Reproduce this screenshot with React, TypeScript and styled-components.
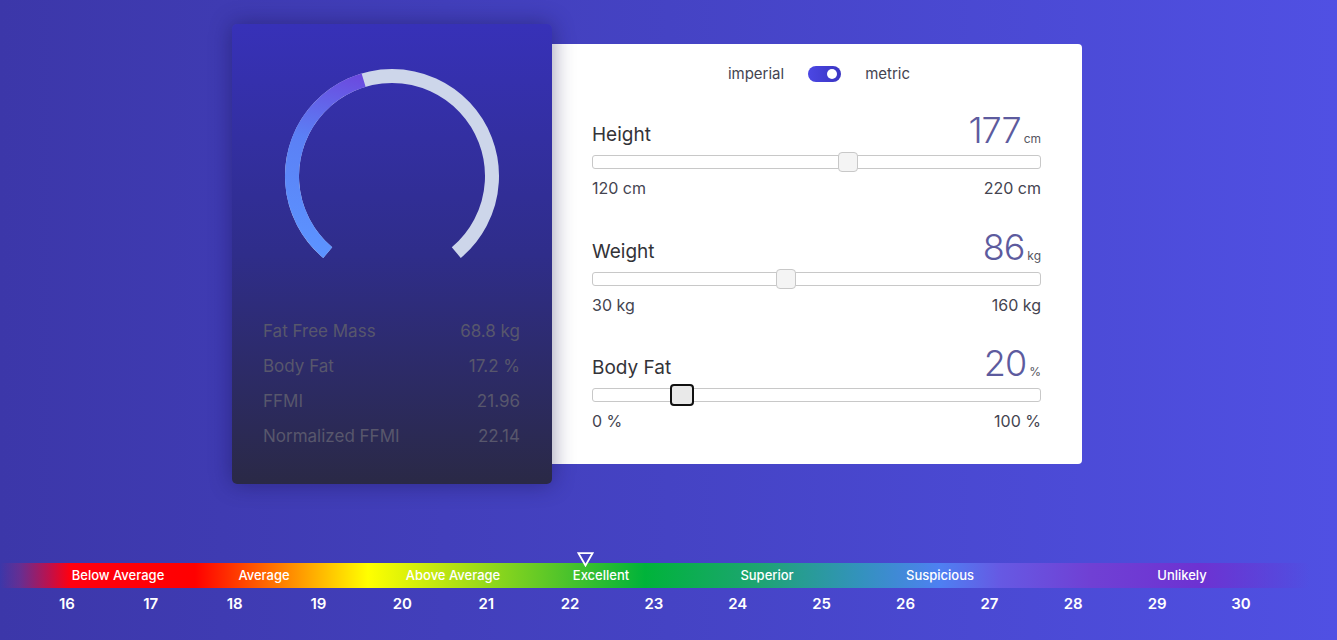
import styled, { createGlobalStyle } from "styled-components";

const GlobalStyle = createGlobalStyle`
  html, body {
    margin: 0;
    padding: 0;
  }
  body {
    font-family: "Inter", "Liberation Sans", sans-serif;
    background: linear-gradient(90deg, #3c37a9 0%, #4543c4 50%, #5050e3 100%);
    min-height: 640px;
    overflow: hidden;
  }
`;

interface iStat {
  label: string;
  value: string;
}

interface iSlider {
  label: string;
  value: number;
  unit: string;
  min: number;
  max: number;
  focused?: boolean;
}

const stats: iStat[] = [
  { label: "Fat Free Mass", value: "68.8 kg" },
  { label: "Body Fat", value: "17.2 %" },
  { label: "FFMI", value: "21.96" },
  { label: "Normalized FFMI", value: "22.14" },
];

const sliders: iSlider[] = [
  { label: "Height", value: 177, unit: "cm", min: 120, max: 220 },
  { label: "Weight", value: 86, unit: "kg", min: 30, max: 160 },
  { label: "Body Fat", value: 20, unit: "%", min: 0, max: 100, focused: true },
];

// label text + width of the segment it is centred in
const zones = [
  { name: "Below Average", w: 146 },
  { name: "Average", w: 146 },
  { name: "Above Average", w: 232 },
  { name: "Excellent", w: 64 },
  { name: "Superior", w: 268 },
  { name: "Suspicious", w: 78 },
  { name: "Unlikely", w: 406 },
];

const numbers = [16, 17, 18, 19, 20, 21, 22, 23, 24, 25, 26, 27, 28, 29, 30];

// point on the gauge circle, angle in degrees clockwise from the top
const pt = (deg: number, cx: number, cy: number, r: number) => {
  const a = (deg * Math.PI) / 180;
  return `${(cx + r * Math.sin(a)).toFixed(2)} ${(cy - r * Math.cos(a)).toFixed(2)}`;
};

const arcPath = (from: number, to: number) => {
  const cx = 120;
  const cy = 112;
  const r = 100;
  const large = to - from > 180 ? 1 : 0;
  return `M ${pt(from, cx, cy, r)} A ${r} ${r} 0 ${large} 1 ${pt(to, cx, cy, r)}`;
};

const Gauge = () => {
  return (
    <GaugeSvg width="240" height="220" viewBox="0 0 240 220">
      <defs>
        <linearGradient id="gfill" gradientUnits="userSpaceOnUse" x1="60" y1="190" x2="100" y2="15">
          <stop offset="0%" stopColor="#5c93ff" />
          <stop offset="60%" stopColor="#5b80f5" />
          <stop offset="100%" stopColor="#6b4adf" />
        </linearGradient>
      </defs>
      <path d={arcPath(-140, 140)} fill="none" stroke="#cdd6ea" strokeWidth="14" />
      <path d={arcPath(-140, -16.5)} fill="none" stroke="url(#gfill)" strokeWidth="14" />
    </GaugeSvg>
  );
};

const Slider = ({ s }: { s: iSlider }) => {
  const frac = (s.value - s.min) / (s.max - s.min);
  const half = s.focused ? 12 : 10;
  return (
    <Field>
      <FieldHead>
        <FieldLabel>{s.label}</FieldLabel>
        <ValueBox>
          <BigValue>{s.value}</BigValue>
          <Unit>{s.unit}</Unit>
        </ValueBox>
      </FieldHead>
      <Track>
        <Thumb $focused={s.focused} style={{ left: `calc(${frac * 100}% - ${half}px)` }} />
      </Track>
      <Range>
        <span>
          {s.min} {s.unit}
        </span>
        <span>
          {s.max} {s.unit}
        </span>
      </Range>
    </Field>
  );
};

const App = () => {
  return (
    <>
      <GlobalStyle />
      <Page>
        <CardsRow>
          <ResultCard>
            <GaugeHolder>
              <Gauge />
            </GaugeHolder>
            <StatList>
              {stats.map((el) => (
                <StatRow key={el.label}>
                  <span>{el.label}</span>
                  <span>{el.value}</span>
                </StatRow>
              ))}
            </StatList>
          </ResultCard>
          <FormCard>
            <ToggleRow>
              <ToggleText>imperial</ToggleText>
              <Switch>
                <Knob />
              </Switch>
              <ToggleText>metric</ToggleText>
            </ToggleRow>
            {sliders.map((s) => (
              <Slider key={s.label} s={s} />
            ))}
          </FormCard>
        </CardsRow>
        <Scale>
          <MarkerRow>
            <svg width="17" height="15" viewBox="0 0 17 15">
              <path d="M1.5 1.2 H15.5 L8.5 13.5 Z" fill="none" stroke="#fff" strokeWidth="1.8" />
            </svg>
          </MarkerRow>
          <Bar>
            {zones.map((z) => (
              <Zone key={z.name} $w={z.w}>
                {z.name}
              </Zone>
            ))}
          </Bar>
          <Numbers>
            {numbers.map((n) => (
              <Num key={n}>{n}</Num>
            ))}
          </Numbers>
        </Scale>
      </Page>
    </>
  );
};
export default App;

const Page = styled.div`
  width: 1337px;
  height: 640px;
  display: flex;
  flex-direction: column;
  padding-top: 24px;
  box-sizing: border-box;
`;

const CardsRow = styled.div`
  display: flex;
  align-items: center;
  justify-content: center;
  padding-right: 23px;
  height: 460px;
`;

const ResultCard = styled.div`
  width: 320px;
  height: 460px;
  border-radius: 5px;
  background: linear-gradient(180deg, #3731b8 0%, #2f2d8a 50%, #2a2946 100%);
  box-shadow: 0 0 22px rgba(20, 15, 70, 0.45);
  position: relative;
  z-index: 2;
  display: flex;
  flex-direction: column;
  box-sizing: border-box;
`;

const GaugeHolder = styled.div`
  display: flex;
  justify-content: center;
  padding-top: 40px;
  height: 260px;
  box-sizing: border-box;
`;

const GaugeSvg = styled.svg`
  display: block;
`;

const StatList = styled.div`
  display: flex;
  flex-direction: column;
  gap: 14px;
  padding: 37px 32px 0 31px;
`;

const StatRow = styled.div`
  display: flex;
  justify-content: space-between;
  font-size: 17px;
  line-height: 21px;
  color: #58576c;
`;

const FormCard = styled.div`
  width: 530px;
  height: 420px;
  background: #fff;
  border-radius: 0 4px 4px 0;
  padding: 20px 41px 0 40px;
  box-sizing: border-box;
  display: flex;
  flex-direction: column;
`;

const ToggleRow = styled.div`
  display: flex;
  align-items: center;
  justify-content: center;
  gap: 24px;
  height: 20px;
  margin-bottom: 30px;
  padding-left: 5px;
`;

const ToggleText = styled.span`
  font-size: 15px;
  color: #444450;
`;

const Switch = styled.div`
  width: 33px;
  height: 16px;
  border-radius: 8px;
  background: linear-gradient(90deg, #4b47e4, #3a35c2);
  display: flex;
  align-items: center;
  justify-content: flex-end;
  padding: 0 4px;
  box-sizing: border-box;
`;

const Knob = styled.div`
  width: 10px;
  height: 10px;
  border-radius: 50%;
  background: #fff;
`;

const Field = styled.div`
  display: flex;
  flex-direction: column;
  height: 118px;
`;

const FieldHead = styled.div`
  display: flex;
  justify-content: space-between;
  align-items: flex-end;
  height: 35px;
  margin-bottom: 6px;
`;

const FieldLabel = styled.span`
  font-size: 19px;
  color: #333338;
  line-height: 24px;
  padding-bottom: 2px;
`;

const ValueBox = styled.div`
  display: flex;
  align-items: baseline;
  gap: 3px;
`;

const BigValue = styled.span`
  font-size: 36px;
  line-height: 38px;
  color: #5d5b9e;
  font-weight: 300;
  letter-spacing: -1px;
`;

const Unit = styled.span`
  font-size: 12px;
  color: #555560;
`;

const Track = styled.div`
  position: relative;
  height: 14px;
  border: 1px solid #c8c8c8;
  border-radius: 3px;
  background: #fff;
  box-sizing: border-box;
`;

const Thumb = styled.div<{ $focused?: boolean }>`
  position: absolute;
  top: ${(p) => (p.$focused ? "-5px" : "-4px")};
  width: ${(p) => (p.$focused ? "24px" : "20px")};
  height: ${(p) => (p.$focused ? "22px" : "20px")};
  box-sizing: border-box;
  border-radius: 4px;
  background: ${(p) => (p.$focused ? "#e9e9e9" : "#f4f4f4")};
  border: ${(p) => (p.$focused ? "2px solid #111" : "1px solid #c8c8c8")};
`;

const Range = styled.div`
  display: flex;
  justify-content: space-between;
  font-size: 16px;
  color: #444450;
  margin-top: 9px;
`;

const Scale = styled.div`
  margin-top: 68px;
  display: flex;
  flex-direction: column;
`;

const MarkerRow = styled.div`
  height: 14px;
  padding-left: 577px;
  margin-bottom: -3px;
  position: relative;
  z-index: 2;
  svg {
    display: block;
  }
`;

const Bar = styled.div`
  width: 1310px;
  height: 25px;
  display: flex;
  align-items: center;
  padding-left: 45px;
  box-sizing: border-box;
  background: linear-gradient(
    90deg,
    rgba(120, 40, 140, 0) 0px,
    rgba(130, 40, 130, 0.6) 20px,
    #c0104a 50px,
    #ff0010 70px,
    #ff0000 195px,
    #ff2a00 225px,
    #ff9a00 300px,
    #ffff00 368px,
    #b6e312 450px,
    #52c42a 560px,
    #00b33a 645px,
    #1ea473 760px,
    #3392bd 860px,
    #4e80f2 940px,
    #6659e3 1000px,
    #7040d4 1090px,
    #6d32d2 1200px,
    rgba(110, 50, 210, 0) 1310px
  );
`;

const Zone = styled.div<{ $w: number }>`
  width: ${(p) => p.$w}px;
  flex-shrink: 0;
  text-align: center;
  white-space: nowrap;
  color: #fff;
  font-size: 13px;
  font-weight: 500;
  line-height: 25px;
`;

const Numbers = styled.div`
  display: grid;
  grid-template-columns: repeat(15, 83.86px);
  margin-left: 25px;
  margin-top: 6px;
`;

const Num = styled.div`
  text-align: center;
  color: #fff;
  font-size: 15px;
  font-weight: 600;
  line-height: 20px;
`;
